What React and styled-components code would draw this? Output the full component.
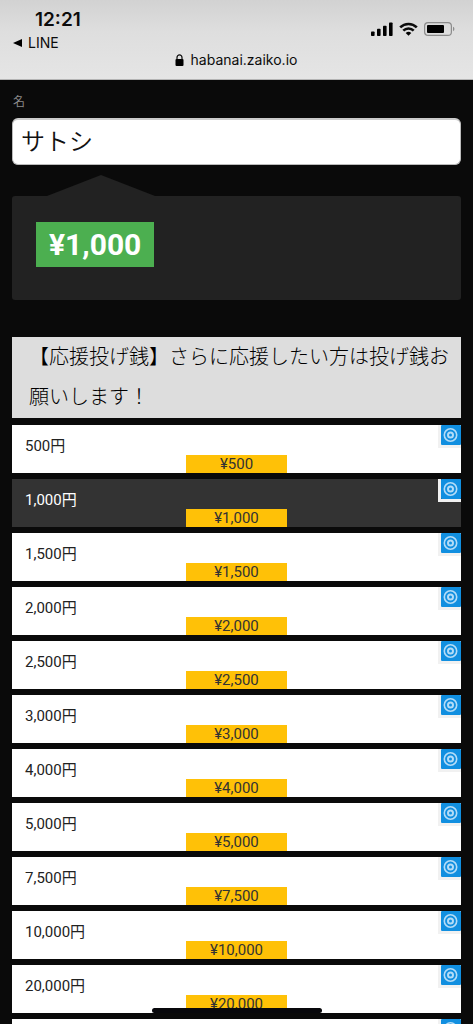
import React, { useState } from "react";
import styled, { createGlobalStyle } from "styled-components";

const GlobalStyle = createGlobalStyle`
  * {
    box-sizing: border-box;
  }

  body {
    margin: 0;
    background-color: #0a0a0a;
    font-family: Roboto, "Noto Sans CJK JP", sans-serif;
  }
`;

const Screen = styled.div`
  display: flex;
  flex-direction: column;
  height: 100vh;
`;

const BrowserBar = styled.header`
  flex: none;
  height: 80px;
  padding: 10px 18px 0 13px;
  background: linear-gradient(#d2d2d2, #dedede 40%, #e5e5e5);
  border-bottom: 1px solid #b4b4b4;
  color: #0c0c0c;
  font-family: Inter, "Liberation Sans", sans-serif;
`;

const StatusRow = styled.div`
  display: flex;
  justify-content: space-between;
  height: 40px;
`;

const Clock = styled.div`
  padding-left: 22px;
  font-size: 19px;
  font-weight: 600;
  line-height: 20px;
`;

const BackLink = styled.a`
  display: flex;
  align-items: center;
  gap: 6px;
  margin-top: 4px;
  color: inherit;
  font-size: 14px;
  line-height: 18px;
  text-decoration: none;
`;

const StatusIcons = styled.div`
  display: flex;
  align-items: center;
  gap: 6px;
  height: 38px;
`;

const Address = styled.div`
  display: flex;
  align-items: center;
  justify-content: center;
  gap: 7px;
  padding-left: 4px;
  font-size: 14px;
  line-height: 20px;
`;

const Page = styled.main`
  flex: 1;
  min-height: 0;
  padding: 12px;
  overflow-y: auto;
  scrollbar-width: none;
`;

const NameLabel = styled.label`
  display: block;
  margin-bottom: 6px;
  padding-left: 1px;
  color: #8a8a8a;
  font-size: 12px;
  line-height: 20px;
`;

const NameInput = styled.input`
  display: block;
  width: 100%;
  height: 47px;
  padding: 0 8px 5px;
  border: 1px solid #bbb;
  border-top: 2px solid #ccc;
  border-radius: 6px;
  background-color: #fff;
  color: #111;
  font-family: inherit;
  font-size: 24px;
  font-weight: 350;
  outline: none;
`;

const Arrow = styled.div`
  width: 108px;
  height: 21px;
  margin: 10px 0 0 35px;
  background-color: #222;
  clip-path: polygon(50% 0, 100% 100%, 0 100%);
`;

const Message = styled.section`
  height: 104px;
  padding: 26px 24px;
  border-radius: 3px;
  background-color: #222;
`;

const Amount = styled.span`
  display: inline-block;
  padding: 0 13px;
  background-color: #4caf50;
  color: #fff;
  font-size: 30px;
  font-weight: 700;
  line-height: 45px;
`;

const Heading = styled.h2`
  margin: 37px 0 7px;
  padding: 0 8px 1px 17px;
  background-color: #ddd;
  color: #000;
  font-size: 20px;
  font-weight: 300;
  line-height: 40px;
`;

const TipList = styled.div`
  display: flex;
  flex-direction: column;
  gap: 6px;
`;

const TipButton = styled.button`
  display: grid;
  grid-template-columns: 1fr 101px 1fr;
  flex: none;
  height: 48px;
  padding: 0;
  border: 0;
  background-color: ${(props) => (props.$selected ? "#333" : "#fff")};
  color: ${(props) => (props.$selected ? "#fff" : "#222")};
  font-family: inherit;
  font-size: 15px;
  text-align: left;
  cursor: pointer;
`;

const TipName = styled.span`
  padding: 11px 0 0 13px;
  line-height: 20px;
`;

const TipPrice = styled.span`
  align-self: end;
  background-color: #ffc107;
  color: #333;
  line-height: 18px;
  text-align: center;
`;

const Badge = styled.span`
  display: flex;
  align-self: start;
  justify-self: end;
  border-left: 3px solid #f1f1f1;
  border-bottom: 3px solid #f1f1f1;
`;

const HomeIndicator = styled.div`
  position: fixed;
  bottom: 11px;
  left: 50%;
  width: 170px;
  height: 5px;
  border-radius: 3px;
  background-color: #08080c;
  transform: translateX(-50%);
`;

const tips = [
  "500",
  "1,000",
  "1,500",
  "2,000",
  "2,500",
  "3,000",
  "4,000",
  "5,000",
  "7,500",
  "10,000",
  "20,000",
  "30,000",
];

function SignalIcon() {
  return (
    <svg width="22" height="14" viewBox="0 0 22 14">
      <rect x="0" y="9.5" width="3.6" height="4.5" rx="0.8" />
      <rect x="6" y="6.8" width="3.6" height="7.2" rx="0.8" />
      <rect x="12" y="3.8" width="3.6" height="10.2" rx="0.8" />
      <rect x="18" y="0.5" width="3.6" height="13.5" rx="0.8" />
    </svg>
  );
}

function WifiIcon() {
  return (
    <svg width="19" height="14" viewBox="0 0 19 14">
      <g fill="none" stroke="#0c0c0c" strokeWidth="2.6">
        <path d="M1.2 5.4a11.8 11.8 0 0 1 16.6 0" />
        <path d="M4.3 8.7a7.4 7.4 0 0 1 10.4 0" />
      </g>
      <path d="M6.7 11a4 4 0 0 1 5.6 0L9.5 13.8z" />
    </svg>
  );
}

function BatteryIcon() {
  return (
    <svg width="31" height="14" viewBox="0 0 31 14">
      <rect
        x="0.6"
        y="0.6"
        width="26.8"
        height="12.8"
        rx="3.5"
        fill="none"
        stroke="#8c8c8c"
        strokeWidth="1.2"
      />
      <rect x="3" y="3" width="17" height="8" rx="1" />
      <path d="M29 4.8a2.4 2.4 0 0 1 0 4.4z" fill="#8c8c8c" />
    </svg>
  );
}

function LockIcon() {
  return (
    <svg width="9" height="12" viewBox="0 0 9 12">
      <rect x="0.5" y="5" width="8" height="7" rx="1" />
      <path
        d="M2 5.5V3.4a2.5 2.5 0 0 1 5 0v2.1"
        fill="none"
        stroke="#0c0c0c"
        strokeWidth="1.2"
      />
    </svg>
  );
}

function TargetIcon() {
  return (
    <svg width="20" height="20" viewBox="0 0 20 20">
      <rect width="20" height="20" rx="1" fill="#118fe0" />
      <g fill="none" stroke="#b4dcf7">
        <circle cx="9.5" cy="10" r="6.2" strokeWidth="1.6" />
        <circle cx="9.5" cy="10" r="2.5" strokeWidth="2" />
      </g>
    </svg>
  );
}

export default function App() {
  const [selected, setSelected] = useState("1,000");

  return (
    <Screen>
      <GlobalStyle />
      <BrowserBar>
        <StatusRow>
          <div>
            <Clock>12:21</Clock>
            <BackLink href="#">
              <svg width="9" height="8" viewBox="0 0 9 8">
                <path d="M0 4l9-4v8z" />
              </svg>
              LINE
            </BackLink>
          </div>
          <StatusIcons>
            <SignalIcon />
            <WifiIcon />
            <BatteryIcon />
          </StatusIcons>
        </StatusRow>
        <Address>
          <LockIcon />
          habanai.zaiko.io
        </Address>
      </BrowserBar>
      <Page>
        <NameLabel htmlFor="name">名</NameLabel>
        <NameInput id="name" type="text" defaultValue="サトシ" />
        <Arrow />
        <Message>
          <Amount>¥{selected}</Amount>
        </Message>
        <Heading>【応援投げ銭】さらに応援したい方は投げ銭お願いします！</Heading>
        <TipList>
          {tips.map((tip) => (
            <TipButton
              key={tip}
              type="button"
              $selected={tip === selected}
              aria-pressed={tip === selected}
              onClick={() => setSelected(tip)}
            >
              <TipName>{tip}円</TipName>
              <TipPrice>¥{tip}</TipPrice>
              <Badge>
                <TargetIcon />
              </Badge>
            </TipButton>
          ))}
        </TipList>
      </Page>
      <HomeIndicator />
    </Screen>
  );
}
